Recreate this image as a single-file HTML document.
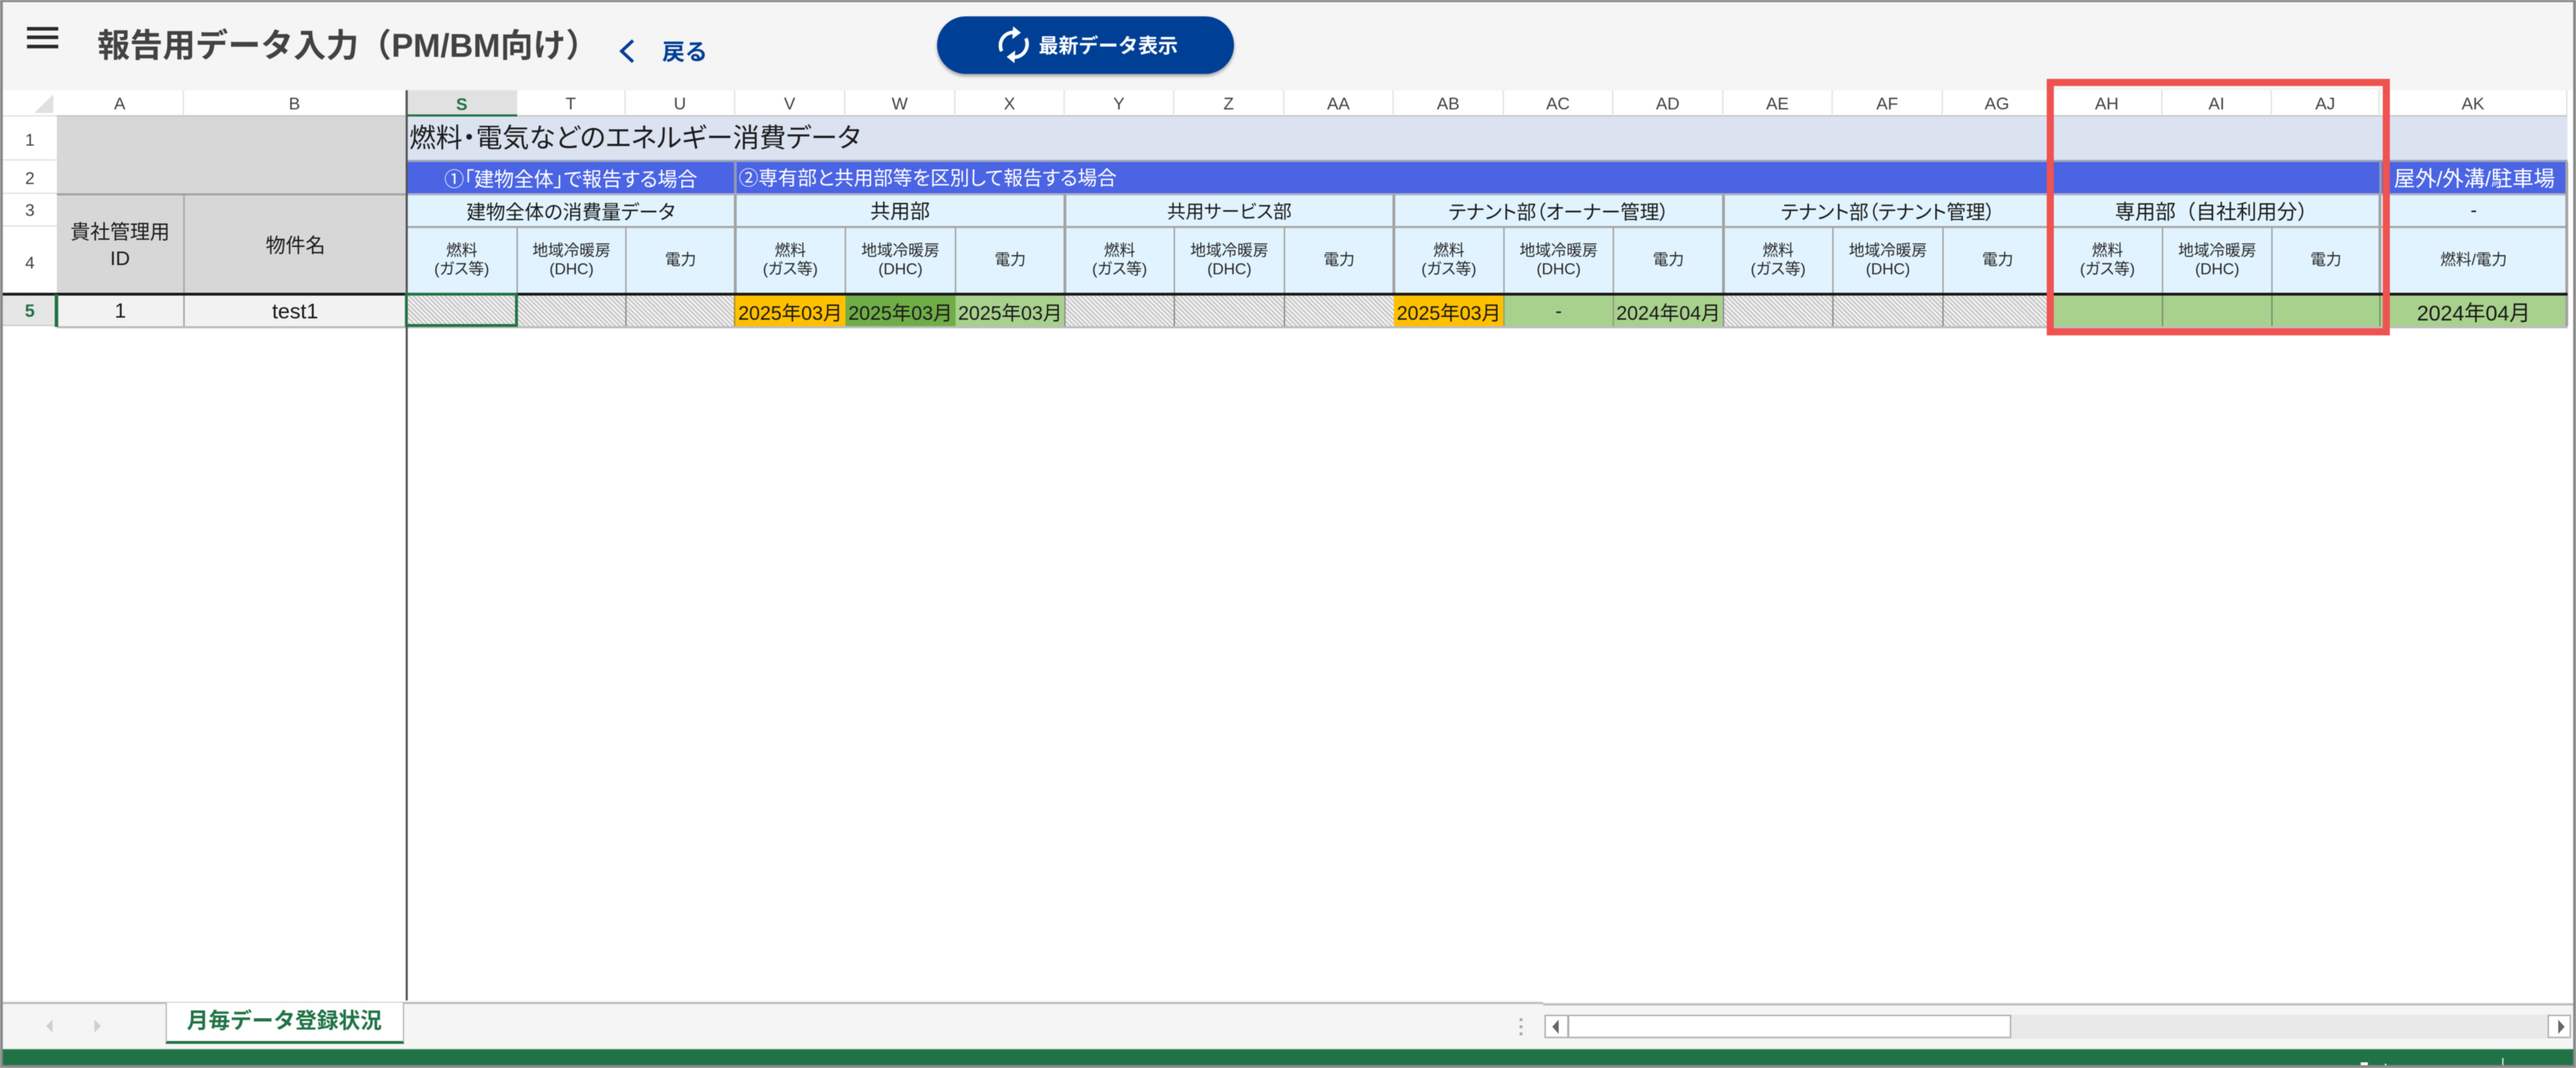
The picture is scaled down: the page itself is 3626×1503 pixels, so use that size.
<!DOCTYPE html>
<html lang="ja"><head><meta charset="utf-8"><title>報告用データ入力</title>
<style>
html,body{margin:0;padding:0;background:#fff}
#p{position:relative;width:3626px;height:1503px;overflow:hidden;background:#fff;font-family:"Liberation Sans","Noto Sans CJK JP",sans-serif;color:#1c1c1c;filter:blur(.6px)}
#p div,#p span.t{position:absolute;box-sizing:border-box}
.c{display:flex;align-items:center;justify-content:center;text-align:center;white-space:nowrap}
.t{white-space:nowrap;line-height:1}
.pa{font-feature-settings:"palt"}
.h{top:127px;height:37px;font-size:24px;color:#444;background:#fff;border-right:2px solid #dfe6df;border-bottom:2px solid #c6c6c6;padding-top:5px}
.r{left:4px;width:76px;font-size:24px;color:#444;background:#fff;border-bottom:2px solid #e0e6e0}
.g{top:273px;height:46px;font-size:27.3px;background:#e1f3fe;font-feature-settings:"palt"}
.s{top:319px;height:94px;font-size:22px;line-height:26px;background:#e1f3fe;color:#2a2a2a;font-feature-settings:"palt"}
.d{top:416px;height:43px;font-size:27.5px;color:#1a1a1a;font-feature-settings:"palt"}
.ha{top:416px;height:43px;background:repeating-linear-gradient(45deg,#c6c6c6 0 2.2px,#f4f4f4 2.2px 4.5px)}
.v{width:2px;background:#a3a3a3}
.w{width:4px;background:#a3a3a3}
</style></head><body><div id="p">

<div style="left:0;top:3px;width:3626px;height:124px;background:#f5f5f5"></div>
<div style="left:38px;top:38px;width:44px;height:5px;background:#2a2a2a"></div>
<div style="left:38px;top:50px;width:44px;height:5px;background:#2a2a2a"></div>
<div style="left:38px;top:63px;width:44px;height:5px;background:#2a2a2a"></div>
<span class="t" style="left:137px;top:41px;font-size:46px;font-weight:700;color:#424242">報告用データ入力（PM/BM向け）</span>
<svg style="position:absolute;left:868px;top:52px" width="30" height="40" viewBox="0 0 30 40"><polyline points="23,5 7,20 23,35" fill="none" stroke="#003f96" stroke-width="4.5"/></svg>
<span class="t" style="left:932px;top:57px;font-size:32px;font-weight:700;color:#003f96">戻る</span>
<div style="left:1319px;top:23px;width:418px;height:81px;border-radius:41px;background:#003f96;box-shadow:0 3px 5px rgba(0,0,0,.35)"></div>
<svg style="position:absolute;left:1397px;top:32.5px" width="60" height="60" viewBox="0 0 60 60"><g fill="none" stroke="#fff" stroke-width="5"><path d="M13 39A18.5 18.5 0 0 1 30 12.5"/><path d="M47 21A18.5 18.5 0 0 1 30 47.5"/></g><path d="M29 4L40 13L28 22Z" fill="#fff"/><path d="M31 56L20 47L32 38Z" fill="#fff"/></svg>
<span class="t" style="left:1462px;top:51px;font-size:28px;font-weight:700;color:#fff">最新データ表示</span>

<!-- column headers -->
<div style="left:4px;top:127px;width:76px;height:37px;background:#fff;border-bottom:2px solid #e0e6e0"></div>
<svg style="position:absolute;left:46px;top:131px" width="32" height="30"><path d="M2 28L29 2V28Z" fill="#e0e0e0"/></svg>
<div class="h c" style="left:80px;width:179px">A</div>
<div class="h c" style="left:259px;width:313px">B</div>
<div class="h c" style="left:572px;width:156px;background:#e1e1e1;color:#217346;font-weight:700;border-right:0;border-bottom:0">S</div>
<div class="h c" style="left:728px;width:153px">T</div>
<div class="h c" style="left:881px;width:154px">U</div>
<div class="h c" style="left:1035px;width:155px">V</div>
<div class="h c" style="left:1190px;width:155px">W</div>
<div class="h c" style="left:1345px;width:154px">X</div>
<div class="h c" style="left:1499px;width:154px">Y</div>
<div class="h c" style="left:1653px;width:155px">Z</div>
<div class="h c" style="left:1808px;width:154px">AA</div>
<div class="h c" style="left:1962px;width:155px">AB</div>
<div class="h c" style="left:2117px;width:154px">AC</div>
<div class="h c" style="left:2271px;width:155px">AD</div>
<div class="h c" style="left:2426px;width:154px">AE</div>
<div class="h c" style="left:2580px;width:155px">AF</div>
<div class="h c" style="left:2735px;width:154px">AG</div>
<div class="h c" style="left:2889px;width:155px">AH</div>
<div class="h c" style="left:3044px;width:154px">AI</div>
<div class="h c" style="left:3198px;width:152px">AJ</div>
<div class="h c" style="left:3350px;width:264px">AK</div>
<div style="left:572px;top:161px;width:156px;height:5px;background:#217346"></div>

<!-- row headers -->
<div class="r c" style="top:164px;height:62px;padding-top:8px">1</div>
<div class="r c" style="top:226px;height:47px;padding-top:6px">2</div>
<div class="r c" style="top:273px;height:46px;padding-top:4px">3</div>
<div class="r c" style="top:319px;height:94px;padding-top:10px;border:0">4</div>
<div class="r c" style="top:416px;height:43px;color:#217346;font-weight:700;background:#e6e6e6;border-bottom:2px solid #d0d0d0;padding-top:3px;font-size:25px">5</div>

<!-- gray frozen header -->
<div style="left:80px;top:164px;width:492px;height:249px;background:#d7d7d7"></div>
<div style="left:80px;top:272px;width:492px;height:3px;background:#a3a3a3"></div>
<div class="v" style="left:258px;top:273px;height:140px"></div>
<div class="c pa" style="left:80px;top:275px;width:178px;height:138px;font-size:28px;line-height:37px;padding-top:2px">貴社管理用<br>ID</div>
<div class="c pa" style="left:260px;top:275px;width:312px;height:138px;font-size:28px;padding-bottom:0">物件名</div>

<!-- band row 1 -->
<div style="left:572px;top:164px;width:3042px;height:62px;background:#dbe3f1"></div>
<span class="t pa" style="left:576px;top:176px;font-size:37.5px">燃料・電気などのエネルギー消費データ</span>
<div style="left:572px;top:225px;width:3042px;height:3px;background:#9aa4bc"></div>

<!-- band row 2 -->
<div style="left:572px;top:228px;width:3042px;height:45px;background:#4a64e4"></div>
<div class="c pa" style="left:572px;top:228px;width:463px;height:45px;font-size:28px;color:#fff">①「建物全体」で報告する場合</div>
<span class="t pa" style="left:1040px;top:237px;font-size:27.5px;color:#fff">②専有部と共用部等を区別して報告する場合</span>
<div class="c pa" style="left:3352px;top:226px;width:262px;height:45px;font-size:30px;color:#fff">屋外/外溝/駐車場</div>
<div class="w" style="left:1033px;top:226px;height:47px;background:#8f99b8"></div>
<div class="w" style="left:3349px;top:226px;height:47px;background:#8f99b8"></div>

<!-- groups row 3 -->
<div class="g c" style="left:572px;width:463px">建物全体の消費量データ</div>
<div class="g c" style="left:1035px;width:464px;font-size:28px">共用部</div>
<div class="g c" style="left:1499px;width:463px;font-size:26px">共用サービス部</div>
<div class="g c" style="left:1962px;width:464px">テナント部（オーナー管理）</div>
<div class="g c" style="left:2426px;width:463px">テナント部（テナント管理）</div>
<div class="g c" style="left:2889px;width:461px;font-size:28.5px;font-feature-settings:normal">専用部（自社利用分）</div>
<div class="g c" style="left:3350px;width:264px">-</div>
<div style="left:572px;top:272px;width:3042px;height:3px;background:#b0b6c8"></div>

<!-- sub row 4 -->
<div class="s c" style="left:572px;width:156px">燃料<br>(ガス等)</div>
<div class="s c" style="left:728px;width:153px">地域冷暖房<br>(DHC)</div>
<div class="s c" style="left:881px;width:154px">電力</div>
<div class="s c" style="left:1035px;width:155px">燃料<br>(ガス等)</div>
<div class="s c" style="left:1190px;width:155px">地域冷暖房<br>(DHC)</div>
<div class="s c" style="left:1345px;width:154px">電力</div>
<div class="s c" style="left:1499px;width:154px">燃料<br>(ガス等)</div>
<div class="s c" style="left:1653px;width:155px">地域冷暖房<br>(DHC)</div>
<div class="s c" style="left:1808px;width:154px">電力</div>
<div class="s c" style="left:1962px;width:155px">燃料<br>(ガス等)</div>
<div class="s c" style="left:2117px;width:154px">地域冷暖房<br>(DHC)</div>
<div class="s c" style="left:2271px;width:155px">電力</div>
<div class="s c" style="left:2426px;width:154px">燃料<br>(ガス等)</div>
<div class="s c" style="left:2580px;width:155px">地域冷暖房<br>(DHC)</div>
<div class="s c" style="left:2735px;width:154px">電力</div>
<div class="s c" style="left:2889px;width:155px">燃料<br>(ガス等)</div>
<div class="s c" style="left:3044px;width:154px">地域冷暖房<br>(DHC)</div>
<div class="s c" style="left:3198px;width:152px">電力</div>
<div class="s c" style="left:3350px;width:264px">燃料/電力</div>
<div style="left:572px;top:318px;width:3042px;height:3px;background:#a8a8a8"></div>

<!-- data row 5 -->
<div class="d c" style="left:80px;width:179px;background:#f2f2f2;padding-top:2px;font-size:29px">1</div>
<div class="d c" style="left:259px;width:313px;background:#f2f2f2;padding-top:2px;font-size:30px">test1</div>
<div class="ha" style="left:572px;width:463px"></div>
<div class="d c" style="left:1035px;width:155px;background:#ffc000">2025年03月</div>
<div class="d c" style="left:1190px;width:155px;background:#70ad47">2025年03月</div>
<div class="d c" style="left:1345px;width:154px;background:#a9d18e">2025年03月</div>
<div class="ha" style="left:1499px;width:463px"></div>
<div class="d c" style="left:1962px;width:155px;background:#ffc000">2025年03月</div>
<div class="d c" style="left:2117px;width:154px;background:#a9d18e">-</div>
<div class="d c" style="left:2271px;width:155px;background:#a9d18e">2024年04月</div>
<div class="ha" style="left:2426px;width:463px"></div>
<div class="d" style="left:2889px;width:461px;background:#a9d18e"></div>
<div class="d c" style="left:3350px;width:264px;background:#a9d18e;font-size:30px">2024年04月</div>
<div style="left:80px;top:459px;width:3534px;height:3px;background:#bdbdbd"></div>

<!-- vertical dividers -->
<div class="v" style="left:258px;top:416px;height:43px;background:#a0a0a0"></div>
<div class="w" style="left:1033px;top:273px;height:140px"></div>
<div class="w" style="left:1497px;top:273px;height:140px"></div>
<div class="w" style="left:1960px;top:273px;height:140px"></div>
<div class="w" style="left:2424px;top:273px;height:140px"></div>
<div class="w" style="left:2887px;top:273px;height:140px"></div>
<div class="w" style="left:3348px;top:273px;height:140px"></div>
<div class="w" style="left:3611px;top:228px;height:231px"></div>
<div class="v" style="left:727px;top:319px;height:94px"></div>
<div class="v" style="left:880px;top:319px;height:94px"></div>
<div class="v" style="left:1189px;top:319px;height:94px"></div>
<div class="v" style="left:1344px;top:319px;height:94px"></div>
<div class="v" style="left:1652px;top:319px;height:94px"></div>
<div class="v" style="left:1807px;top:319px;height:94px"></div>
<div class="v" style="left:2116px;top:319px;height:94px"></div>
<div class="v" style="left:2270px;top:319px;height:94px"></div>
<div class="v" style="left:2579px;top:319px;height:94px"></div>
<div class="v" style="left:2734px;top:319px;height:94px"></div>
<div class="v" style="left:3043px;top:319px;height:94px"></div>
<div class="v" style="left:3197px;top:319px;height:94px"></div>
<div class="v" style="left:880px;top:416px;height:43px;background:#8f8f8f"></div>
<div class="v" style="left:1033px;top:416px;height:43px;background:#a58c3c"></div>
<div class="v" style="left:1498px;top:416px;height:43px;background:#8f8f8f"></div>
<div class="v" style="left:1652px;top:416px;height:43px;background:#8f8f8f"></div>
<div class="v" style="left:1807px;top:416px;height:43px;background:#8f8f8f"></div>
<div class="v" style="left:2116px;top:416px;height:43px;background:#8f9f80"></div>
<div class="v" style="left:2270px;top:416px;height:43px;background:#8f9f80"></div>
<div class="v" style="left:2425px;top:416px;height:43px;background:#8f8f8f"></div>
<div class="v" style="left:2579px;top:416px;height:43px;background:#8f8f8f"></div>
<div class="v" style="left:2734px;top:416px;height:43px;background:#8f8f8f"></div>
<div class="v" style="left:3043px;top:416px;height:43px;background:#7f8f70"></div>
<div class="v" style="left:3197px;top:416px;height:43px;background:#7f8f70"></div>
<div class="v" style="left:3349px;top:416px;height:43px;background:#7f8f70"></div>
<div style="left:4px;top:412px;width:3610px;height:4px;background:#1a1a1a"></div>
<div style="left:571px;top:127px;width:3px;height:1281px;background:#555"></div>

<!-- selection -->
<div style="left:77px;top:414px;width:5px;height:46px;background:#217346"></div>
<div style="left:570px;top:412px;width:159px;height:48px;border:4px solid #217346"></div>

<!-- red highlight -->
<div style="left:2881px;top:111px;width:483px;height:361px;border:10px solid #ef5350"></div>

<!-- tab bar -->
<div style="left:0;top:1411px;width:3626px;height:65px;background:#f5f5f5"></div>
<div style="left:4px;top:1410px;width:2168px;height:3px;background:#bdbdbd"></div>
<div style="left:2172px;top:1412px;width:1450px;height:3px;background:#bdbdbd"></div>
<svg style="position:absolute;left:60px;top:1432px" width="84" height="24"><path d="M14 3L5 12L14 21Z" fill="#cfcfcf"/><path d="M73 3L82 12L73 21Z" fill="#cfcfcf"/></svg>
<div style="left:233px;top:1411px;width:336px;height:58px;background:#fff;border-left:2px solid #bdbdbd;border-right:2px solid #bdbdbd;border-bottom:4px solid #217346"></div>
<span class="t" style="left:263px;top:1422px;font-size:30.5px;font-weight:700;color:#217346">月毎データ登録状況</span>
<div style="left:2139px;top:1433px;width:4px;height:4px;background:#a8a8a8"></div>
<div style="left:2139px;top:1443px;width:4px;height:4px;background:#a8a8a8"></div>
<div style="left:2139px;top:1453px;width:4px;height:4px;background:#a8a8a8"></div>
<div style="left:2207px;top:1428px;width:1379px;height:34px;background:#e9e9e9"></div>
<div style="left:2174px;top:1428px;width:657px;height:33px;background:#fff;border:2px solid #b0b0b0"></div>
<div style="left:2206px;top:1428px;width:3px;height:33px;background:#b0b0b0"></div>
<svg style="position:absolute;left:2182px;top:1433px" width="16" height="24"><path d="M12 2L3 12L12 22Z" fill="#666"/></svg>
<div style="left:3586px;top:1428px;width:33px;height:33px;background:#fff;border:2px solid #b0b0b0"></div>
<svg style="position:absolute;left:3597px;top:1433px" width="16" height="24"><path d="M4 2L13 12L4 22Z" fill="#666"/></svg>

<!-- status bar -->
<div style="left:0;top:1476px;width:3626px;height:24px;background:#217346;border-top:1px solid #8fb8a2"></div>
<div style="left:36px;top:1497px;width:54px;height:3px;overflow:hidden"><span class="t" style="position:absolute;left:0;top:0;font-size:22px;color:#fff">Ready</span></div>
<div style="left:3323px;top:1495px;width:10px;height:5px;background:#fff"></div>
<div style="left:3357px;top:1497px;width:2px;height:3px;background:#fff"></div>
<div style="left:3522px;top:1489px;width:2px;height:11px;background:#cfe3d8"></div>
<div style="left:3566px;top:1497px;width:42px;height:3px;overflow:hidden"><span class="t" style="position:absolute;left:0;top:0;font-size:22px;color:#fff">85%</span></div>

<!-- window frame -->
<div style="left:0;top:0;width:3626px;height:3px;background:#8a8a8a"></div>
<div style="left:0;top:0;width:4px;height:1503px;background:#8a8a8a"></div>
<div style="left:3622px;top:0;width:4px;height:1503px;background:#8a8a8a"></div>
<div style="left:0;top:1499px;width:3626px;height:4px;background:#8a8a8a"></div>
</div></body></html>
